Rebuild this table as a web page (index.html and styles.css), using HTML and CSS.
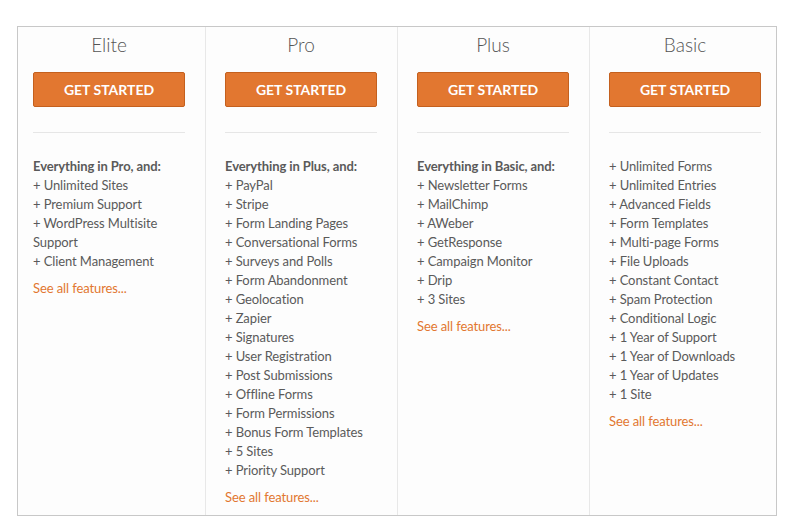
FILE: index.html
```html
<!DOCTYPE html>
<html>
<head>
<meta charset="utf-8">
<link rel="stylesheet" href="styles.css">
</head>
<body>
<div class="table">
  <div class="col first">
    <h3 class="name">Elite</h3>
    <a class="btn">GET STARTED</a>
    <hr class="sep">
    <div class="feats">
      <div class="lead">Everything in Pro, and:</div>
      <div>+ Unlimited Sites</div>
      <div>+ Premium Support</div>
      <div>+ WordPress Multisite Support</div>
      <div>+ Client Management</div>
    </div>
    <a class="more">See all features...</a>
  </div>
  <div class="col">
    <h3 class="name">Pro</h3>
    <a class="btn">GET STARTED</a>
    <hr class="sep">
    <div class="feats">
      <div class="lead">Everything in Plus, and:</div>
      <div>+ PayPal</div>
      <div>+ Stripe</div>
      <div>+ Form Landing Pages</div>
      <div>+ Conversational Forms</div>
      <div>+ Surveys and Polls</div>
      <div>+ Form Abandonment</div>
      <div>+ Geolocation</div>
      <div>+ Zapier</div>
      <div>+ Signatures</div>
      <div>+ User Registration</div>
      <div>+ Post Submissions</div>
      <div>+ Offline Forms</div>
      <div>+ Form Permissions</div>
      <div>+ Bonus Form Templates</div>
      <div>+ 5 Sites</div>
      <div>+ Priority Support</div>
    </div>
    <a class="more">See all features...</a>
  </div>
  <div class="col">
    <h3 class="name">Plus</h3>
    <a class="btn">GET STARTED</a>
    <hr class="sep">
    <div class="feats">
      <div class="lead">Everything in Basic, and:</div>
      <div>+ Newsletter Forms</div>
      <div>+ MailChimp</div>
      <div>+ AWeber</div>
      <div>+ GetResponse</div>
      <div>+ Campaign Monitor</div>
      <div>+ Drip</div>
      <div>+ 3 Sites</div>
    </div>
    <a class="more">See all features...</a>
  </div>
  <div class="col last">
    <h3 class="name">Basic</h3>
    <a class="btn">GET STARTED</a>
    <hr class="sep">
    <div class="feats">
      <div>+ Unlimited Forms</div>
      <div>+ Unlimited Entries</div>
      <div>+ Advanced Fields</div>
      <div>+ Form Templates</div>
      <div>+ Multi-page Forms</div>
      <div>+ File Uploads</div>
      <div>+ Constant Contact</div>
      <div>+ Spam Protection</div>
      <div>+ Conditional Logic</div>
      <div>+ 1 Year of Support</div>
      <div>+ 1 Year of Downloads</div>
      <div>+ 1 Year of Updates</div>
      <div>+ 1 Site</div>
    </div>
    <a class="more">See all features...</a>
  </div>
</div>
</body>
</html>
```
FILE: styles.css
```css
html, body {
  margin: 0;
  padding: 0;
  background: #fff;
}
body {
  padding: 26px 0 0 17px;
  font-family: Lato, "Open Sans", sans-serif;
  color: #555;
}
.table {
  width: 758px;
  border: 1px solid #c8c8c8;
  display: grid;
  grid-template-columns: 187px 192px 192px 187px;
  background: #fff;
}
.col {
  border-left: 1px solid #e8e8e8;
  padding: 6px 20px 8px 19px;
  display: flex;
  flex-direction: column;
  background: #fdfdfd;
}
.col.first {
  border-left: none;
  padding-left: 15px;
  padding-right: 20px;
}
.col.last {
  padding-right: 15px;
}
.name {
  margin: 0;
  font-size: 19px;
  line-height: 23px;
  font-weight: 300;
  text-align: center;
  color: #555;
}
.btn {
  display: block;
  margin-top: 16px;
  height: 33px;
  line-height: 33px;
  background: #e27730;
  border: 1px solid #c4601e;
  border-radius: 2px;
  color: #fff;
  font-weight: 700;
  font-size: 14px;
  text-align: center;
}
.sep {
  margin: 25px 0 0;
  border: 0;
  border-top: 1px solid #e6e6e6;
  height: 0;
}
.feats {
  margin-top: 24px;
  font-size: 13px;
  line-height: 19px;
  color: #5a5a5a;
  letter-spacing: -0.1px;
}
.lead {
  font-weight: 700;
}
.more {
  margin-top: 8px;
  font-size: 13px;
  line-height: 19px;
  color: #e27730;
  letter-spacing: -0.1px;
}
```
